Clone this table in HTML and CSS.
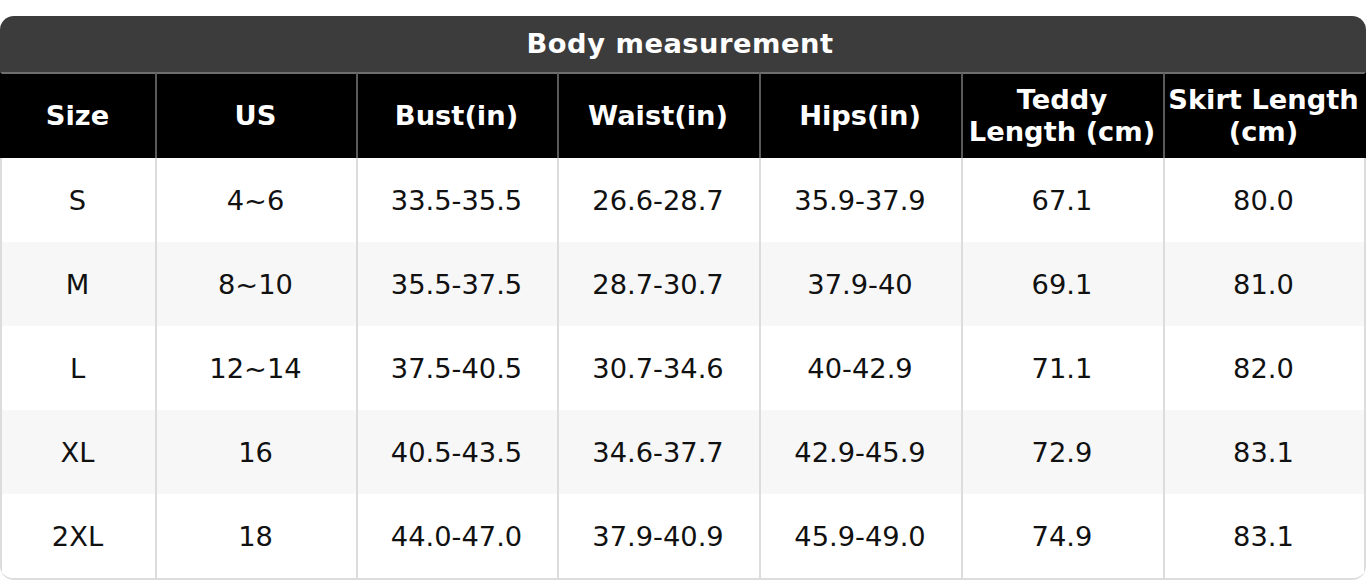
FILE: index.html
```html
<!DOCTYPE html>
<html>
<head>
<meta charset="utf-8">
<link rel="stylesheet" href="styles.css">
</head>
<body>
<div class="wrap">
  <div class="title">Body measurement</div>
  <div class="grid">
    <div class="hc">Size</div>
    <div class="hc">US</div>
    <div class="hc">Bust(in)</div>
    <div class="hc">Waist(in)</div>
    <div class="hc">Hips(in)</div>
    <div class="hc">Teddy<br>Length (cm)</div>
    <div class="hc">Skirt Length<br>(cm)</div>

    <div class="c">S</div><div class="c">4~6</div><div class="c">33.5-35.5</div><div class="c">26.6-28.7</div><div class="c">35.9-37.9</div><div class="c">67.1</div><div class="c">80.0</div>
    <div class="c z">M</div><div class="c z">8~10</div><div class="c z">35.5-37.5</div><div class="c z">28.7-30.7</div><div class="c z">37.9-40</div><div class="c z">69.1</div><div class="c z">81.0</div>
    <div class="c">L</div><div class="c">12~14</div><div class="c">37.5-40.5</div><div class="c">30.7-34.6</div><div class="c">40-42.9</div><div class="c">71.1</div><div class="c">82.0</div>
    <div class="c z">XL</div><div class="c z">16</div><div class="c z">40.5-43.5</div><div class="c z">34.6-37.7</div><div class="c z">42.9-45.9</div><div class="c z">72.9</div><div class="c z">83.1</div>
    <div class="c">2XL</div><div class="c">18</div><div class="c">44.0-47.0</div><div class="c">37.9-40.9</div><div class="c">45.9-49.0</div><div class="c">74.9</div><div class="c">83.1</div>
  </div>
</div>
</body>
</html>
```

FILE: styles.css
```css
html, body {
  margin: 0;
  padding: 0;
  background: #ffffff;
}
body {
  padding-top: 16px;
  font-family: "DejaVu Sans", "Liberation Sans", sans-serif;
  font-size: 27.3px;
}
.wrap {
  width: 1366px;
  border-radius: 14px;
  overflow: hidden;
  border-bottom: 2px solid #dcdcdc;
  box-sizing: border-box;
}
.title {
  height: 56px;
  background: #3c3c3c;
  color: #ffffff;
  font-weight: bold;
  display: flex;
  align-items: center;
  justify-content: center;
  letter-spacing: 0.5px;
  padding-right: 6px;
  padding-bottom: 2px;
  box-sizing: border-box;
}
.grid {
  display: grid;
  grid-template-columns: 155px 201px 201px 202px 202px 202px 203px;
  grid-template-rows: 86px;
  grid-auto-rows: 84px;
}
.grid > div {
  box-sizing: border-box;
  display: flex;
  align-items: center;
  justify-content: center;
  text-align: center;
  border-left: 2px solid #dcdcdc;
  padding-right: 2px;
}
.hc {
  background: #000000;
  color: #ffffff;
  font-weight: bold;
  line-height: 32px;
  border-top: 2px solid #6e6e6e;
  height: 86px;
  border-left-color: #5a5a5a !important;
}
.grid > div:nth-child(7n+1) {
  border-left-color: #dcdcdc;
}
.grid > .hc:nth-child(1) {
  border-left-color: #000000 !important;
}
.grid > div:nth-child(7n) {
  border-right: 2px solid #dcdcdc;
}
.grid > .hc:nth-child(7) {
  border-right-color: #000000;
}
.c {
  color: #111111;
  background: #ffffff;
}
.c.z {
  background: #f7f7f7;
}
```
